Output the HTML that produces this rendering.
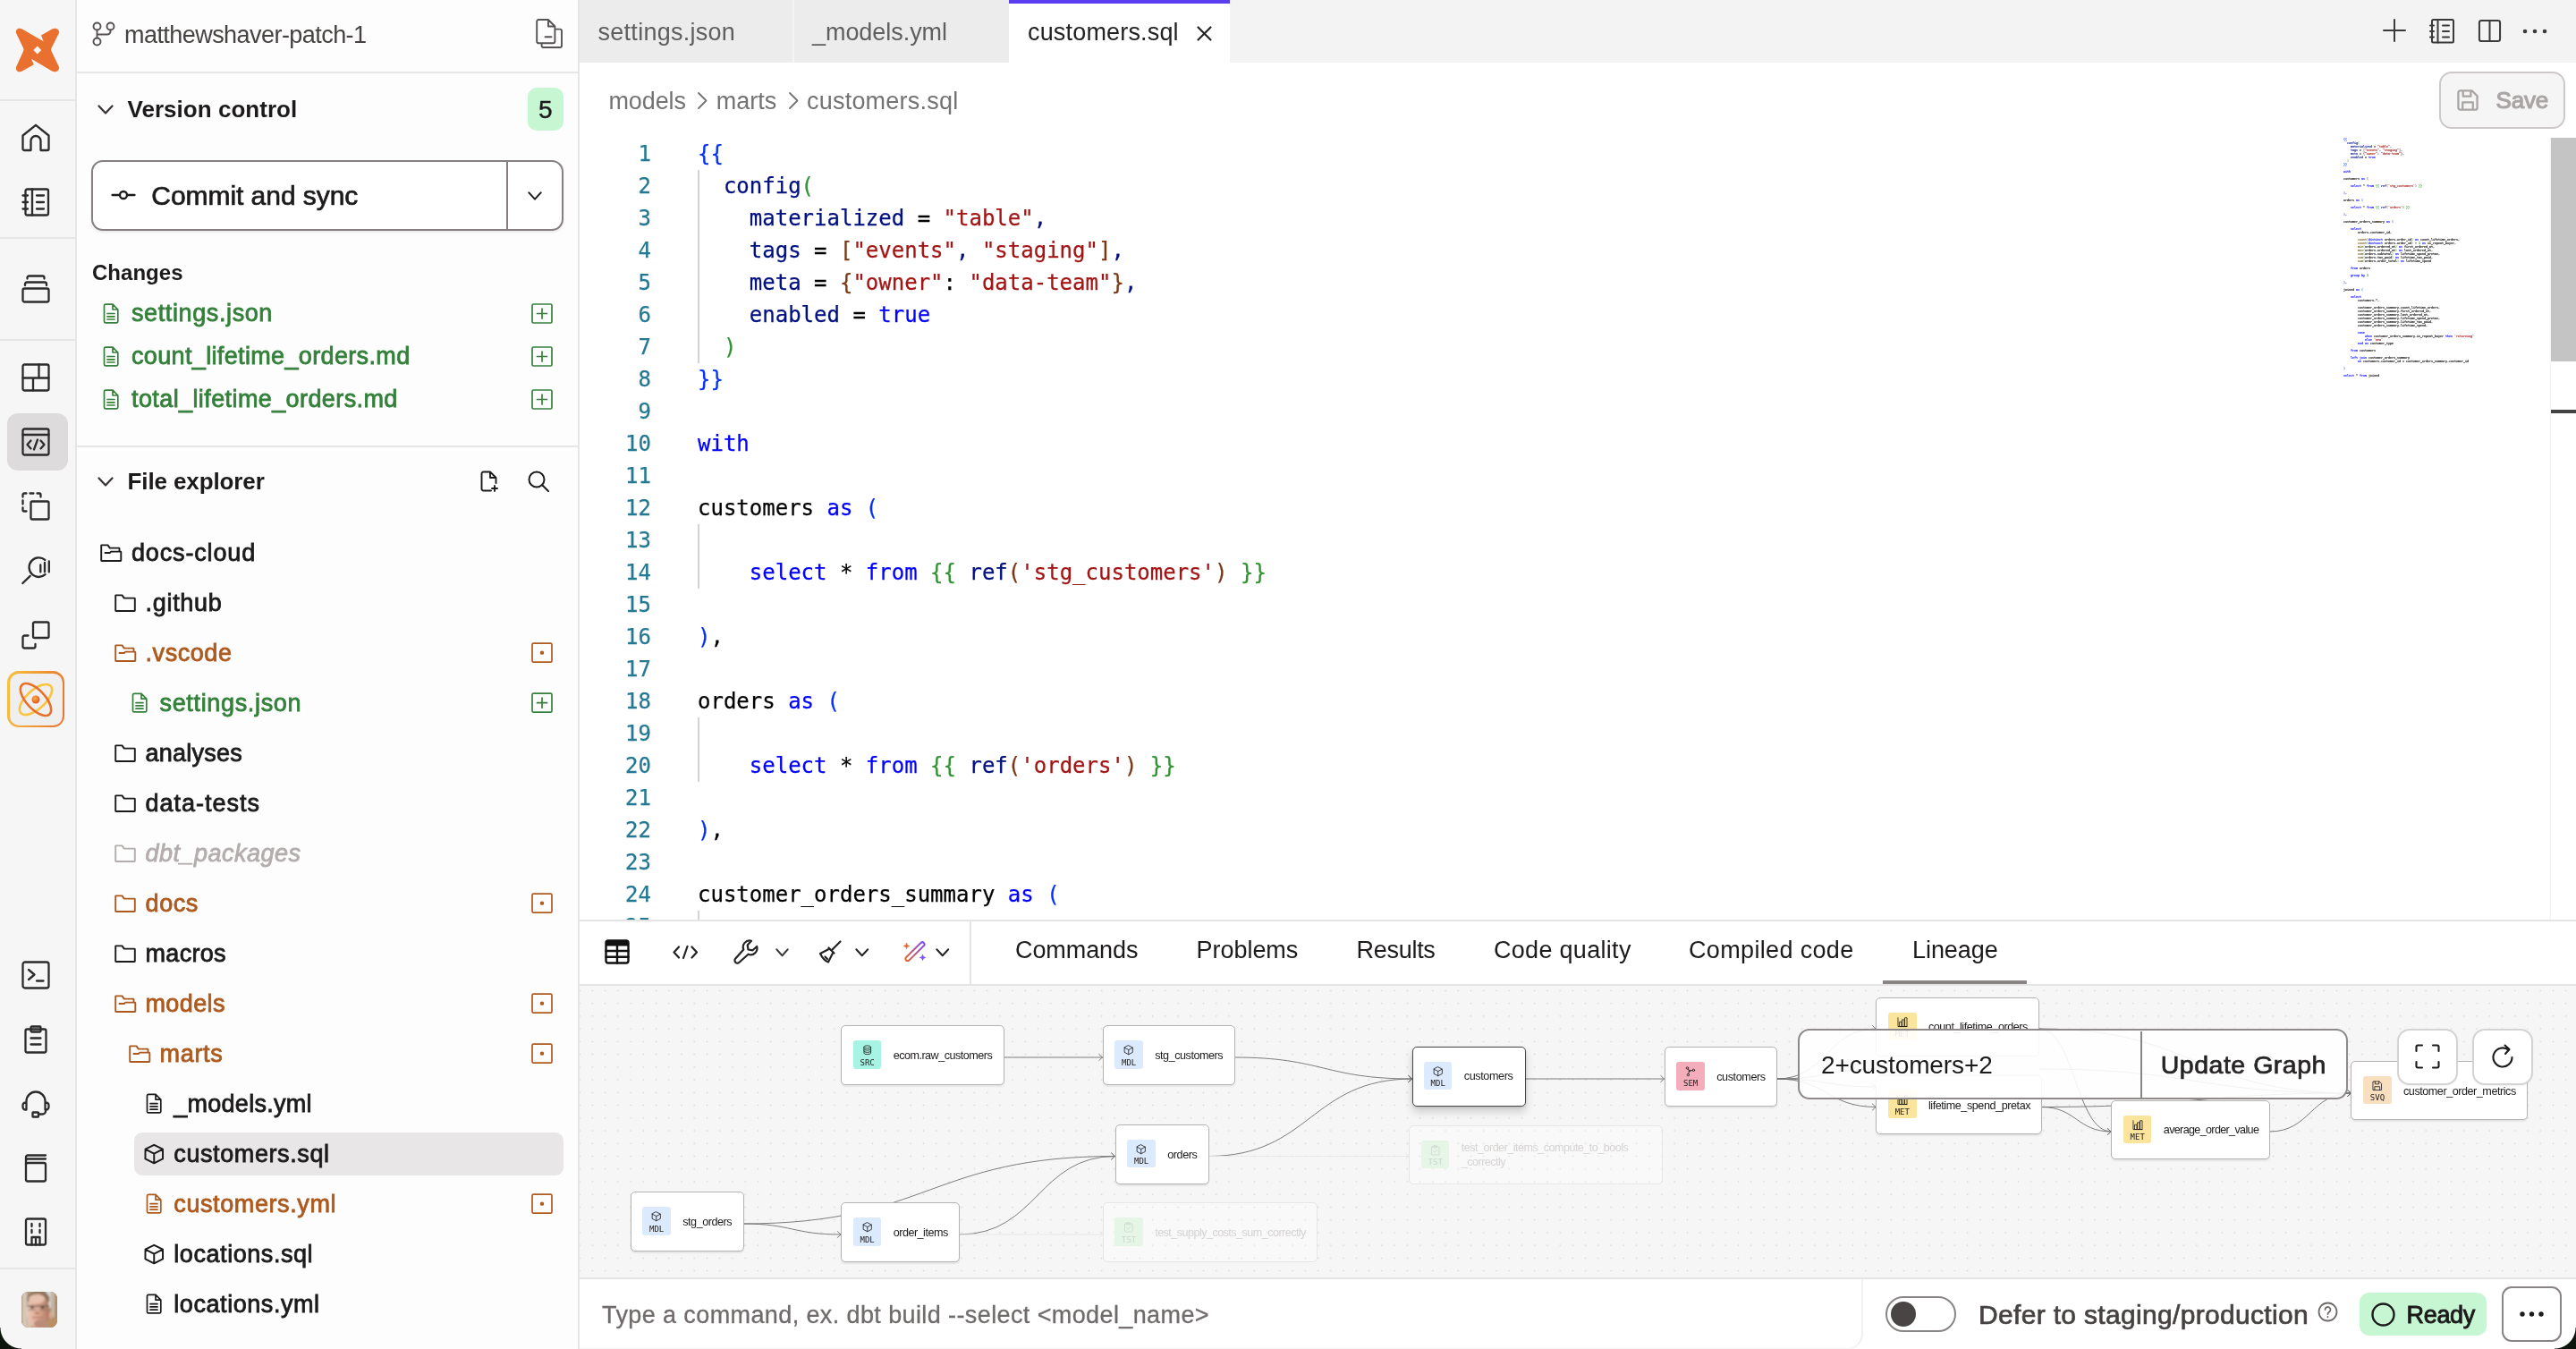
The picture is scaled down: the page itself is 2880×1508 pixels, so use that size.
<!DOCTYPE html>
<html lang="en"><head><meta charset="utf-8"><title>dbt Cloud IDE - customers.sql</title>
<style>
*{box-sizing:border-box;margin:0;padding:0}
html,body{width:2880px;height:1508px;overflow:hidden;background:#fff}
body{font-family:"Liberation Sans", sans-serif;position:relative;color:#1f1f1f}
.t{position:absolute;white-space:pre}
.b{position:absolute}
.b>svg{display:block;width:100%;height:100%;overflow:visible}
svg{fill:none;stroke:currentColor;stroke-linecap:round;stroke-linejoin:round}
.code{position:absolute;left:781px;top:0;font-family:"DejaVu Sans Mono","Liberation Mono",monospace;font-size:24px;white-space:pre;color:#000;letter-spacing:0;-webkit-text-stroke:0.25px}
.ln{position:absolute;font-family:"DejaVu Sans Mono","Liberation Mono",monospace;font-size:24px;color:#237893;text-align:right;width:80px;left:647px;white-space:pre;-webkit-text-stroke:0.25px}
.cl{position:absolute;left:0;height:36px;line-height:36px}
.k{color:#0000ff}.v{color:#001080}.s{color:#a31515}.b1{color:#0431fa}.b2{color:#319331}.b3{color:#7b3814}.n{color:#098658}.f{color:#795e26}
</style></head><body><div id="app" style="position:absolute;left:0;top:0;width:2880px;height:1508px;overflow:hidden;will-change:transform">

<div class="b" style="left:0px;top:0px;width:84px;height:1508px;background:#f7f6f6"></div>
<div class="b" style="left:84px;top:0px;width:2px;height:1508px;background:#e7e5e5"></div>
<div class="b" style="left:86px;top:0px;width:560px;height:1508px;background:#fdfdfd"></div>
<div class="b" style="left:646px;top:0px;width:2px;height:1508px;background:#e7e5e5"></div>
<div class="b" style="left:648px;top:0px;width:2232px;height:70px;background:#f3f3f3"></div>
<div class="b" style="left:648px;top:0px;width:480px;height:70px;background:#ececec"></div>
<div class="b" style="left:10px;top:22px;width:66px;height:66px;color:#2b2b2b;"><svg viewBox="0 0 66 66" style="stroke:none"><path fill="#e9702e" d="M8.300 15.500 C6.500 11 10.500 8.200 14.800 10.400 L38.600 24.200 L36 17.600 L48.200 10.400 C52.500 8.200 57.500 11 55.700 15.500 L47.400 32 Q46.800 33.500 47.400 35 L55.700 52.300 C57.500 56.800 52.500 59.800 48.200 57.600 L25 43.800 L27.800 50.200 L14.800 57.600 C10.500 59.800 6.500 56.800 8.300 52.300 L16.200 35 Q16.800 33.500 16.200 32Z"/><path fill="#f7f6f6" d="M31.800 29.600 L36.200 34 L31.800 38.400 L27.400 34Z"/></svg></div>
<div class="b" style="left:0px;top:111px;width:84px;height:2px;background:#e7e5e5"></div>
<div class="b" style="left:24px;top:138px;width:32px;height:32px;color:#2b2b2b;"><svg viewBox="0 0 32 32" stroke-width="2.3" ><path d="M1.500 13.500 L16 1.800 L30.500 13.500 V28.500 a1.500 1.500 0 0 1 -1.500 1.500 H21.500 V19.500 a5.500 5.500 0 0 0 -11 0 V30 H3 a1.500 1.500 0 0 1 -1.500 -1.500Z"/></svg></div>
<div class="b" style="left:24px;top:210px;width:32px;height:32px;color:#2b2b2b;"><svg viewBox="0 0 32 32" stroke-width="2.3" ><rect x="4.5" y="1.5" width="25.5" height="29" rx="2"/><path d="M12 1.5 V30.5 M1.5 8.5 H7 M1.5 16 H7 M1.5 23.5 H7 M17 8.500 H25 M17 16 H25 M17 23.500 H25"/></svg></div>
<div class="b" style="left:0px;top:265px;width:84px;height:2px;background:#e7e5e5"></div>
<div class="b" style="left:24px;top:307px;width:32px;height:32px;color:#2b2b2b;"><svg viewBox="0 0 32 32" stroke-width="2.3" ><rect x="1.5" y="15.5" width="29" height="15" rx="2"/><path d="M4 12 V10.500 a2 2 0 0 1 2 -2 H26 a2 2 0 0 1 2 2 V12 M6.500 4.500 V3.500 a2 2 0 0 1 2 -2 H23.500 a2 2 0 0 1 2 2 V4.500"/></svg></div>
<div class="b" style="left:0px;top:379px;width:84px;height:2px;background:#e7e5e5"></div>
<div class="b" style="left:24px;top:406px;width:32px;height:32px;color:#2b2b2b;"><svg viewBox="0 0 32 32" stroke-width="2.3" ><rect x="1.5" y="1.5" width="29" height="29" rx="2"/><path d="M1.5 16.500 H30.500 M19.500 1.500 V16.500 M13 16.500 V30.500"/></svg></div>
<div class="b" style="left:8px;top:462px;width:68px;height:64px;background:#dddbdb;border-radius:12px"></div>
<div class="b" style="left:24px;top:478px;width:32px;height:32px;color:#2b2b2b;"><svg viewBox="0 0 32 32" stroke-width="2.3" ><rect x="1.5" y="1.5" width="29" height="29" rx="2"/><path d="M1.5 8 H30.500 M10.500 14.500 L6.500 19 L10.500 23.500 M21.500 14.500 L25.500 19 L21.500 23.500 M18 13.500 L14 24.500"/></svg></div>
<div class="b" style="left:24px;top:550px;width:32px;height:32px;color:#2b2b2b;"><svg viewBox="0 0 32 32" stroke-width="2.3" ><rect x="10.5" y="10.5" width="20" height="20" rx="1.5"/><path d="M1.5 5.500 V3 a1.500 1.500 0 0 1 1.500 -1.500 H5.500 M9.500 1.500 H13.500 M17.500 1.500 H20 a1.500 1.500 0 0 1 1.500 1.500 V5.500 M1.500 9.500 V13.500 M1.500 17.500 V20 a1.500 1.500 0 0 0 1.500 1.500 H5.500"/></svg></div>
<div class="b" style="left:24px;top:621px;width:32px;height:32px;color:#2b2b2b;"><svg viewBox="0 0 32 32" stroke-width="2.3" ><path d="M26.300 4.900 A10.800 10.800 0 1 0 26.600 21.200 M9.700 22.900 L1.300 31 M21.300 10.500 V18.400 M26 7.900 V18.400 M30.800 6.500 V18.400"/></svg></div>
<div class="b" style="left:24px;top:694px;width:32px;height:32px;color:#2b2b2b;"><svg viewBox="0 0 32 32" stroke-width="2.3" ><rect x="13" y="1.500" width="17.500" height="17.500" rx="1.500"/><path d="M7.500 16.500 H3.500 a2 2 0 0 0 -2 2 V28.500 a2 2 0 0 0 2 2 H13.500 a2 2 0 0 0 2 -2 V26"/></svg></div>
<div class="b" style="left:8px;top:750px;width:64px;height:63px;border-radius:13px;background:linear-gradient(100deg,#f9c440,#e8702a)"></div>
<div class="b" style="left:10.5px;top:752.5px;width:59px;height:58px;background:#f0efef;border-radius:10.5px"></div>
<div class="b" style="left:16px;top:758px;width:48px;height:48px;color:#2b2b2b;"><svg viewBox="0 0 48 48" stroke-width="2.6"><defs><radialGradient id="ag" cx="40%" cy="35%"><stop offset="0" stop-color="#f9b23c"/><stop offset="1" stop-color="#e8672a"/></radialGradient></defs><ellipse cx="24" cy="24" rx="22.500" ry="10.500" transform="rotate(-42 24 24)" stroke="#f9c440"/><ellipse cx="24" cy="24" rx="22.500" ry="10.500" transform="rotate(47 24 24)" stroke="#e8702a"/><circle cx="24" cy="24" r="4.5" fill="url(#ag)" stroke="none"/></svg></div>
<div class="b" style="left:24px;top:1073.5px;width:32px;height:32px;color:#2b2b2b;"><svg viewBox="0 0 32 32" stroke-width="2.3" ><rect x="1.5" y="1.5" width="29" height="29" rx="2.5"/><path d="M8 10 L14.500 15.500 L8 21 M17 22.500 H24.500"/></svg></div>
<div class="b" style="left:24px;top:1146px;width:32px;height:32px;color:#2b2b2b;"><svg viewBox="0 0 32 32" stroke-width="2.3" ><rect x="4.5" y="4.500" width="23" height="26" rx="2"/><rect x="10.500" y="1.500" width="11" height="6" rx="1"/><path d="M10.500 14.500 H21.500 M10.500 21.500 H21.500"/></svg></div>
<div class="b" style="left:24px;top:1217.5px;width:32px;height:32px;color:#2b2b2b;"><svg viewBox="0 0 32 32" stroke-width="2.3" ><path d="M5.500 17 V13 a10.500 10.500 0 0 1 21 0 V17 M5.500 14.500 H4.500 a3 3 0 0 0 -3 3 V19.500 a3 3 0 0 0 3 3 H5.500Z M26.500 14.500 H27.500 a3 3 0 0 1 3 3 V19.500 a3 3 0 0 1 -3 3 H26.500Z M27 22.500 V24 a3.500 3.500 0 0 1 -3.500 3.500 H19"/><rect x="12.500" y="25.500" width="6.500" height="5" rx=".5"/></svg></div>
<div class="b" style="left:24px;top:1289.5px;width:32px;height:32px;color:#2b2b2b;"><svg viewBox="0 0 32 32" stroke-width="2.3" ><rect x="5" y="10" width="22" height="20.500" rx="2"/><path d="M5 12 V3.500 a2 2 0 0 1 2 -2 H27 M5 7.500 a2 2 0 0 1 2 -2 H27"/></svg></div>
<div class="b" style="left:24px;top:1361px;width:32px;height:32px;color:#2b2b2b;"><svg viewBox="0 0 32 32" stroke-width="2.3" ><rect x="5" y="1.500" width="22" height="29" rx="2"/><path d="M11.500 7 V10 M20.500 7 V10 M11.500 14 V17 M20.500 14 V17 M11.500 30.500 V22 H20.500 V30.500 M16 22 V30.500"/></svg></div>
<div class="b" style="left:0px;top:1417px;width:84px;height:2px;background:#e7e5e5"></div>
<div class="b" style="left:24px;top:1444px;width:40px;height:40px;border-radius:8px;overflow:hidden;background:#a58a72"><svg viewBox="0 0 40 40" style="stroke:none"><defs><filter id="avb" x="-10%" y="-10%" width="120%" height="120%"><feGaussianBlur stdDeviation="0.9"/></filter><linearGradient id="avf" x1="0" y1="0" x2="1" y2="0"><stop offset="0" stop-color="#ecc9b8"/><stop offset=".55" stop-color="#d9a68f"/><stop offset="1" stop-color="#a8745e"/></linearGradient></defs><rect width="40" height="40" fill="#b79c80"/><g filter="url(#avb)"><rect x="-2" y="-2" width="44" height="44" fill="#b39a7f"/><rect x="1" y="-2" width="5" height="44" fill="#d2c8ba"/><rect x="6.500" y="22" width="4" height="20" fill="#d6c7b0"/><rect x="28" y="-2" width="5" height="20" fill="#d9dadd"/><rect x="34" y="-2" width="3" height="30" fill="#cbb9a2"/><rect x="37" y="4" width="4" height="36" fill="#a98b6c"/><rect x="30" y="30" width="11" height="11" fill="#b98f63"/><ellipse cx="19" cy="8" rx="12.500" ry="9" fill="#8b6f58"/><ellipse cx="18.500" cy="22" rx="13" ry="19.500" fill="url(#avf)"/><ellipse cx="17" cy="8" rx="9" ry="5" fill="#e8c2ae"/><ellipse cx="32.500" cy="26" rx="1.800" ry="4" fill="#d9a48f"/><rect x="6" y="15.300" width="25" height="1.300" fill="#6b5a50"/><rect x="7.500" y="19.800" width="9" height="1" fill="#8a7468"/><rect x="20" y="19.800" width="9" height="1" fill="#8a7468"/><ellipse cx="12" cy="17.600" rx="2" ry="1.200" fill="#3d3029"/><ellipse cx="23.500" cy="17.600" rx="2" ry="1.200" fill="#3d3029"/><ellipse cx="17.500" cy="24" rx="2.500" ry="1.200" fill="#b5705c"/><rect x="12" y="28.200" width="12" height="1.100" fill="#a86a5c"/><ellipse cx="22" cy="36" rx="8" ry="5" fill="#b98c7a"/></g></svg></div>
<div class="b" style="left:103px;top:24px;width:26px;height:28px;color:#575252;"><svg viewBox="0 0 26 28" stroke-width="1.9" ><circle cx="5.5" cy="5.500" r="4"/><circle cx="20.500" cy="5.500" r="4"/><circle cx="5.500" cy="22.500" r="4"/><path d="M5.500 9.500 V18.500 M20.500 9.500 V11 a3.500 3.500 0 0 1 -3.500 3.500 H5.500"/></svg></div>
<div class="t" style="left:139px;top:20.80px;font-size:27.0px;line-height:36px;color:#474242;font-weight:400;font-style:normal;letter-spacing:-0.554px;">matthewshaver-patch-1</div>
<div class="b" style="left:599px;top:21px;width:30px;height:33px;color:#575252;"><svg viewBox="0 0 30 33" stroke-width="1.9" ><path d="M3.200 1 H14 L21.400 8.500 V25.300 a2 2 0 0 1 -2 2 H3.200 a2 2 0 0 1 -2 -2 V3 a2 2 0 0 1 2 -2Z M14 1 V8.500 H21.400 M10.500 20.300 H17.500 M6.600 28.500 V30 a2 2 0 0 0 2 2 H27 a2 2 0 0 0 2 -2 V13.600 a2 2 0 0 0 -2 -2 H23"/></svg></div>
<div class="b" style="left:86px;top:80px;width:560px;height:2px;background:#e7e5e5"></div>
<div class="b" style="left:109px;top:117px;width:18px;height:11px;color:#3b3737;"><svg viewBox="0 0 18 11" stroke-width="2.3" preserveAspectRatio="none"><path d="M1.500 1.500 L9 9.500 L16.500 1.500"/></svg></div>
<div class="t" style="left:142.5px;top:103.86px;font-size:26px;line-height:36px;color:#1c1a1a;font-weight:700;font-style:normal;letter-spacing:0.036px;">Version control</div>
<div class="b" style="left:590px;top:98px;width:40px;height:48px;background:#c6f7d2;border-radius:10px"></div>
<div class="t" style="left:602px;top:104.08px;font-size:28px;line-height:37px;color:#1c1a1a;font-weight:400;font-style:normal;-webkit-text-stroke:0.4px #1c1a1a;">5</div>
<div class="b" style="left:102px;top:178.5px;width:528px;height:79px;border:2px solid #857f7f;border-radius:13px;background:#fff;box-shadow:0 2px 3px rgba(0,0,0,.08)"></div>
<div class="b" style="left:566px;top:180px;width:2px;height:76px;background:#857f7f"></div>
<div class="b" style="left:124px;top:207px;width:28px;height:22px;color:#1c1a1a;"><svg viewBox="0 0 28 22" stroke-width="2.3" ><circle cx="14" cy="11" r="4"/><path d="M1.500 11 H10 M18 11 H26.500"/></svg></div>
<div class="t" style="left:169.3px;top:198.50px;font-size:30px;line-height:39px;color:#1c1a1a;font-weight:400;font-style:normal;letter-spacing:-0.05px;-webkit-text-stroke:0.7px #1c1a1a;">Commit and sync</div>
<div class="b" style="left:590px;top:214px;width:16px;height:10px;color:#1c1a1a;"><svg viewBox="0 0 18 11" stroke-width="2.3" preserveAspectRatio="none"><path d="M1.500 1.500 L9 9.500 L16.500 1.500"/></svg></div>
<div class="t" style="left:103px;top:288.14px;font-size:24px;line-height:33px;color:#1c1a1a;font-weight:700;font-style:normal;letter-spacing:0.02px;">Changes</div>
<div class="b" style="left:115px;top:338.5px;width:18px;height:23px;color:#34803b;"><svg viewBox="0 0 18 23" stroke-width="1.7" ><path d="M3 1.200 H11 L16.800 7 V20.300 a1.500 1.500 0 0 1 -1.500 1.500 H3 a1.500 1.500 0 0 1 -1.500 -1.500 V2.700 a1.500 1.500 0 0 1 1.500 -1.500Z M11 1.200 V7 H16.800 M5 11.500 H13 M5 14.800 H13 M5 18 H13"/></svg></div>
<div class="t" style="left:147px;top:331.50px;font-size:27.0px;line-height:36px;color:#34803b;font-weight:400;font-style:normal;letter-spacing:0.608px;-webkit-text-stroke:0.8px #34803b;">settings.json</div>
<div class="b" style="left:594px;top:338.5px;width:24px;height:23px;color:#34803b;"><svg viewBox="0 0 24 23" stroke-width="1.7" ><rect x="1" y="1" width="22" height="21" rx="1.500"/><path d="M6.500 11.500 H17.500 M12 6 V17"/></svg></div>
<div class="b" style="left:115px;top:386.5px;width:18px;height:23px;color:#34803b;"><svg viewBox="0 0 18 23" stroke-width="1.7" ><path d="M3 1.200 H11 L16.800 7 V20.300 a1.500 1.500 0 0 1 -1.500 1.500 H3 a1.500 1.500 0 0 1 -1.500 -1.500 V2.700 a1.500 1.500 0 0 1 1.500 -1.500Z M11 1.200 V7 H16.800 M5 11.500 H13 M5 14.800 H13 M5 18 H13"/></svg></div>
<div class="t" style="left:147px;top:379.50px;font-size:27.0px;line-height:36px;color:#34803b;font-weight:400;font-style:normal;letter-spacing:0.348px;-webkit-text-stroke:0.8px #34803b;">count_lifetime_orders.md</div>
<div class="b" style="left:594px;top:386.5px;width:24px;height:23px;color:#34803b;"><svg viewBox="0 0 24 23" stroke-width="1.7" ><rect x="1" y="1" width="22" height="21" rx="1.500"/><path d="M6.500 11.500 H17.500 M12 6 V17"/></svg></div>
<div class="b" style="left:115px;top:434.5px;width:18px;height:23px;color:#34803b;"><svg viewBox="0 0 18 23" stroke-width="1.7" ><path d="M3 1.200 H11 L16.800 7 V20.300 a1.500 1.500 0 0 1 -1.500 1.500 H3 a1.500 1.500 0 0 1 -1.500 -1.500 V2.700 a1.500 1.500 0 0 1 1.500 -1.500Z M11 1.200 V7 H16.800 M5 11.500 H13 M5 14.800 H13 M5 18 H13"/></svg></div>
<div class="t" style="left:147px;top:427.50px;font-size:27.0px;line-height:36px;color:#34803b;font-weight:400;font-style:normal;letter-spacing:0.402px;-webkit-text-stroke:0.8px #34803b;">total_lifetime_orders.md</div>
<div class="b" style="left:594px;top:434.5px;width:24px;height:23px;color:#34803b;"><svg viewBox="0 0 24 23" stroke-width="1.7" ><rect x="1" y="1" width="22" height="21" rx="1.500"/><path d="M6.500 11.500 H17.500 M12 6 V17"/></svg></div>
<div class="b" style="left:86px;top:498px;width:560px;height:2px;background:#e7e5e5"></div>
<div class="b" style="left:109px;top:533px;width:18px;height:11px;color:#3b3737;"><svg viewBox="0 0 18 11" stroke-width="2.3" preserveAspectRatio="none"><path d="M1.500 1.500 L9 9.500 L16.500 1.500"/></svg></div>
<div class="t" style="left:142.5px;top:519.86px;font-size:26px;line-height:36px;color:#1c1a1a;font-weight:700;font-style:normal;letter-spacing:-0.11px;">File explorer</div>
<div class="b" style="left:537px;top:526px;width:21px;height:24px;color:#1c1a1a;"><svg viewBox="0 0 21 24" stroke-width="1.9" ><path d="M12 22.500 H3.500 a2 2 0 0 1 -2 -2 V3.500 a2 2 0 0 1 2 -2 H11 L17.500 8 V14 M11 1.500 V8 H17.500 M16 17 V23 M13 20 H19"/></svg></div>
<div class="b" style="left:590px;top:526px;width:24px;height:24px;color:#1c1a1a;"><svg viewBox="0 0 24 24" stroke-width="2" ><circle cx="10" cy="10" r="8.500"/><path d="M16.500 16.500 L23 23"/></svg></div>
<div class="b" style="left:111.5px;top:607.7px;width:24.5px;height:20.3px;color:#1c1a1a;"><svg viewBox="0 0 24.5 20" stroke-width="1.9" ><path d="M1.200 1.700 a.5 .5 0 0 1 .5 -.5 H8.500 L10.800 4.500 H21 a.5 .5 0 0 1 .5 .5 V8 M5.500 9.800 H11 L12.200 8.500 H22.800 a.5 .5 0 0 1 .5 .5 V18.300 a.5 .5 0 0 1 -.5 .5 H1.700 a.5 .5 0 0 1 -.5 -.5 V1.700"/></svg></div>
<div class="t" style="left:147px;top:599.80px;font-size:27.0px;line-height:36px;color:#1c1a1a;font-weight:400;font-style:normal;letter-spacing:0.842px;-webkit-text-stroke:0.8px #1c1a1a;">docs-cloud</div>
<div class="b" style="left:128px;top:663.6px;width:24px;height:20.3px;color:#1c1a1a;"><svg viewBox="0 0 24 20" stroke-width="1.9" ><path d="M1.200 1.700 a.5 .5 0 0 1 .5 -.5 H8.500 L10.800 4.500 H22.300 a.5 .5 0 0 1 .5 .5 V18.300 a.5 .5 0 0 1 -.5 .5 H1.700 a.5 .5 0 0 1 -.5 -.5Z"/></svg></div>
<div class="t" style="left:162.5px;top:655.80px;font-size:27.0px;line-height:36px;color:#1c1a1a;font-weight:400;font-style:normal;letter-spacing:0.703px;-webkit-text-stroke:0.8px #1c1a1a;">.github</div>
<div class="b" style="left:128px;top:719.7px;width:24.5px;height:20.3px;color:#ad5a1e;"><svg viewBox="0 0 24.5 20" stroke-width="1.9" ><path d="M1.200 1.700 a.5 .5 0 0 1 .5 -.5 H8.500 L10.800 4.500 H21 a.5 .5 0 0 1 .5 .5 V8 M5.500 9.800 H11 L12.200 8.500 H22.800 a.5 .5 0 0 1 .5 .5 V18.300 a.5 .5 0 0 1 -.5 .5 H1.700 a.5 .5 0 0 1 -.5 -.5 V1.700"/></svg></div>
<div class="t" style="left:162.5px;top:711.80px;font-size:27.0px;line-height:36px;color:#ad5a1e;font-weight:400;font-style:normal;letter-spacing:0.562px;-webkit-text-stroke:0.8px #ad5a1e;">.vscode</div>
<div class="b" style="left:594px;top:718px;width:24px;height:23.3px;color:#ad5a1e;"><svg viewBox="0 0 24 23" stroke-width="1.7" ><rect x="1" y="1" width="22" height="21" rx="1.500"/><circle cx="12" cy="11.500" r="2.2" fill="currentColor" stroke="none"/></svg></div>
<div class="b" style="left:146.7px;top:774.2px;width:18px;height:23.3px;color:#34803b;"><svg viewBox="0 0 18 23" stroke-width="1.7" ><path d="M3 1.200 H11 L16.800 7 V20.300 a1.500 1.500 0 0 1 -1.500 1.500 H3 a1.500 1.500 0 0 1 -1.500 -1.500 V2.700 a1.500 1.500 0 0 1 1.500 -1.500Z M11 1.200 V7 H16.800 M5 11.500 H13 M5 14.800 H13 M5 18 H13"/></svg></div>
<div class="t" style="left:178.5px;top:767.80px;font-size:27.0px;line-height:36px;color:#34803b;font-weight:400;font-style:normal;letter-spacing:0.662px;-webkit-text-stroke:0.8px #34803b;">settings.json</div>
<div class="b" style="left:594px;top:774px;width:24px;height:23.3px;color:#34803b;"><svg viewBox="0 0 24 23" stroke-width="1.7" ><rect x="1" y="1" width="22" height="21" rx="1.500"/><path d="M6.500 11.500 H17.500 M12 6 V17"/></svg></div>
<div class="b" style="left:128px;top:831.6px;width:24px;height:20.3px;color:#1c1a1a;"><svg viewBox="0 0 24 20" stroke-width="1.9" ><path d="M1.200 1.700 a.5 .5 0 0 1 .5 -.5 H8.500 L10.800 4.500 H22.300 a.5 .5 0 0 1 .5 .5 V18.300 a.5 .5 0 0 1 -.5 .5 H1.700 a.5 .5 0 0 1 -.5 -.5Z"/></svg></div>
<div class="t" style="left:162.5px;top:823.80px;font-size:27.0px;line-height:36px;color:#1c1a1a;font-weight:400;font-style:normal;letter-spacing:0.24px;-webkit-text-stroke:0.8px #1c1a1a;">analyses</div>
<div class="b" style="left:128px;top:887.6px;width:24px;height:20.3px;color:#1c1a1a;"><svg viewBox="0 0 24 20" stroke-width="1.9" ><path d="M1.200 1.700 a.5 .5 0 0 1 .5 -.5 H8.500 L10.800 4.500 H22.300 a.5 .5 0 0 1 .5 .5 V18.300 a.5 .5 0 0 1 -.5 .5 H1.700 a.5 .5 0 0 1 -.5 -.5Z"/></svg></div>
<div class="t" style="left:162.5px;top:879.80px;font-size:27.0px;line-height:36px;color:#1c1a1a;font-weight:400;font-style:normal;letter-spacing:0.994px;-webkit-text-stroke:0.8px #1c1a1a;">data-tests</div>
<div class="b" style="left:128px;top:943.6px;width:24px;height:20.3px;color:#b3adad;"><svg viewBox="0 0 24 20" stroke-width="1.9" ><path d="M1.200 1.700 a.5 .5 0 0 1 .5 -.5 H8.500 L10.800 4.500 H22.300 a.5 .5 0 0 1 .5 .5 V18.300 a.5 .5 0 0 1 -.5 .5 H1.700 a.5 .5 0 0 1 -.5 -.5Z"/></svg></div>
<div class="t" style="left:162.5px;top:935.80px;font-size:27.0px;line-height:36px;color:#b3adad;font-weight:400;font-style:italic;letter-spacing:0.488px;-webkit-text-stroke:0.8px #b3adad;">dbt_packages</div>
<div class="b" style="left:128px;top:999.6px;width:24px;height:20.3px;color:#ad5a1e;"><svg viewBox="0 0 24 20" stroke-width="1.9" ><path d="M1.200 1.700 a.5 .5 0 0 1 .5 -.5 H8.500 L10.800 4.500 H22.300 a.5 .5 0 0 1 .5 .5 V18.300 a.5 .5 0 0 1 -.5 .5 H1.700 a.5 .5 0 0 1 -.5 -.5Z"/></svg></div>
<div class="t" style="left:162.5px;top:991.80px;font-size:27.0px;line-height:36px;color:#ad5a1e;font-weight:400;font-style:normal;letter-spacing:0.613px;-webkit-text-stroke:0.8px #ad5a1e;">docs</div>
<div class="b" style="left:594px;top:998px;width:24px;height:23.3px;color:#ad5a1e;"><svg viewBox="0 0 24 23" stroke-width="1.7" ><rect x="1" y="1" width="22" height="21" rx="1.500"/><circle cx="12" cy="11.500" r="2.2" fill="currentColor" stroke="none"/></svg></div>
<div class="b" style="left:128px;top:1055.6px;width:24px;height:20.3px;color:#1c1a1a;"><svg viewBox="0 0 24 20" stroke-width="1.9" ><path d="M1.200 1.700 a.5 .5 0 0 1 .5 -.5 H8.500 L10.800 4.500 H22.300 a.5 .5 0 0 1 .5 .5 V18.300 a.5 .5 0 0 1 -.5 .5 H1.700 a.5 .5 0 0 1 -.5 -.5Z"/></svg></div>
<div class="t" style="left:162.5px;top:1047.80px;font-size:27.0px;line-height:36px;color:#1c1a1a;font-weight:400;font-style:normal;letter-spacing:0.314px;-webkit-text-stroke:0.8px #1c1a1a;">macros</div>
<div class="b" style="left:128px;top:1111.7px;width:24.5px;height:20.3px;color:#ad5a1e;"><svg viewBox="0 0 24.5 20" stroke-width="1.9" ><path d="M1.200 1.700 a.5 .5 0 0 1 .5 -.5 H8.500 L10.800 4.500 H21 a.5 .5 0 0 1 .5 .5 V8 M5.500 9.800 H11 L12.200 8.500 H22.800 a.5 .5 0 0 1 .5 .5 V18.300 a.5 .5 0 0 1 -.5 .5 H1.700 a.5 .5 0 0 1 -.5 -.5 V1.700"/></svg></div>
<div class="t" style="left:162.5px;top:1103.80px;font-size:27.0px;line-height:36px;color:#ad5a1e;font-weight:400;font-style:normal;letter-spacing:0.376px;-webkit-text-stroke:0.8px #ad5a1e;">models</div>
<div class="b" style="left:594px;top:1110px;width:24px;height:23.3px;color:#ad5a1e;"><svg viewBox="0 0 24 23" stroke-width="1.7" ><rect x="1" y="1" width="22" height="21" rx="1.500"/><circle cx="12" cy="11.500" r="2.2" fill="currentColor" stroke="none"/></svg></div>
<div class="b" style="left:144px;top:1167.7px;width:24.5px;height:20.3px;color:#ad5a1e;"><svg viewBox="0 0 24.5 20" stroke-width="1.9" ><path d="M1.200 1.700 a.5 .5 0 0 1 .5 -.5 H8.500 L10.800 4.500 H21 a.5 .5 0 0 1 .5 .5 V8 M5.500 9.800 H11 L12.200 8.500 H22.800 a.5 .5 0 0 1 .5 .5 V18.300 a.5 .5 0 0 1 -.5 .5 H1.700 a.5 .5 0 0 1 -.5 -.5 V1.700"/></svg></div>
<div class="t" style="left:178.5px;top:1159.80px;font-size:27.0px;line-height:36px;color:#ad5a1e;font-weight:400;font-style:normal;letter-spacing:0.7px;-webkit-text-stroke:0.8px #ad5a1e;">marts</div>
<div class="b" style="left:594px;top:1166px;width:24px;height:23.3px;color:#ad5a1e;"><svg viewBox="0 0 24 23" stroke-width="1.7" ><rect x="1" y="1" width="22" height="21" rx="1.500"/><circle cx="12" cy="11.500" r="2.2" fill="currentColor" stroke="none"/></svg></div>
<div class="b" style="left:162.7px;top:1222.2px;width:18px;height:23.3px;color:#1c1a1a;"><svg viewBox="0 0 18 23" stroke-width="1.7" ><path d="M3 1.200 H11 L16.800 7 V20.300 a1.500 1.500 0 0 1 -1.500 1.500 H3 a1.500 1.500 0 0 1 -1.500 -1.500 V2.700 a1.500 1.500 0 0 1 1.500 -1.500Z M11 1.200 V7 H16.800 M5 11.500 H13 M5 14.800 H13 M5 18 H13"/></svg></div>
<div class="t" style="left:194.3px;top:1215.80px;font-size:27.0px;line-height:36px;color:#1c1a1a;font-weight:400;font-style:normal;letter-spacing:0.259px;-webkit-text-stroke:0.8px #1c1a1a;">_models.yml</div>
<div class="b" style="left:150px;top:1266px;width:480px;height:48px;background:#e8e6e6;border-radius:9px"></div>
<div class="b" style="left:160.5px;top:1277.8px;width:22.5px;height:24.2px;color:#1c1a1a;"><svg viewBox="0 0 23 24" stroke-width="2" ><path d="M11.500 1.500 L21.500 6.500 V17.500 L11.500 22.500 L1.500 17.500 V6.500Z M1.500 6.500 L11.500 11.500 L21.500 6.500 M11.500 11.500 V22.500"/></svg></div>
<div class="t" style="left:194.3px;top:1271.80px;font-size:27.0px;line-height:36px;color:#1c1a1a;font-weight:400;font-style:normal;letter-spacing:0.595px;-webkit-text-stroke:0.8px #1c1a1a;">customers.sql</div>
<div class="b" style="left:162.7px;top:1334.2px;width:18px;height:23.3px;color:#ad5a1e;"><svg viewBox="0 0 18 23" stroke-width="1.7" ><path d="M3 1.200 H11 L16.800 7 V20.300 a1.500 1.500 0 0 1 -1.500 1.500 H3 a1.500 1.500 0 0 1 -1.500 -1.500 V2.700 a1.500 1.500 0 0 1 1.500 -1.500Z M11 1.200 V7 H16.800 M5 11.500 H13 M5 14.800 H13 M5 18 H13"/></svg></div>
<div class="t" style="left:194.3px;top:1327.80px;font-size:27.0px;line-height:36px;color:#ad5a1e;font-weight:400;font-style:normal;letter-spacing:0.598px;-webkit-text-stroke:0.8px #ad5a1e;">customers.yml</div>
<div class="b" style="left:594px;top:1334px;width:24px;height:23.3px;color:#ad5a1e;"><svg viewBox="0 0 24 23" stroke-width="1.7" ><rect x="1" y="1" width="22" height="21" rx="1.500"/><circle cx="12" cy="11.500" r="2.2" fill="currentColor" stroke="none"/></svg></div>
<div class="b" style="left:160.5px;top:1389.8px;width:22.5px;height:24.2px;color:#1c1a1a;"><svg viewBox="0 0 23 24" stroke-width="2" ><path d="M11.500 1.500 L21.500 6.500 V17.500 L11.500 22.500 L1.500 17.500 V6.500Z M1.500 6.500 L11.500 11.500 L21.500 6.500 M11.500 11.500 V22.500"/></svg></div>
<div class="t" style="left:194.3px;top:1383.80px;font-size:27.0px;line-height:36px;color:#1c1a1a;font-weight:400;font-style:normal;letter-spacing:0.562px;-webkit-text-stroke:0.8px #1c1a1a;">locations.sql</div>
<div class="b" style="left:162.7px;top:1446.2px;width:18px;height:23.3px;color:#1c1a1a;"><svg viewBox="0 0 18 23" stroke-width="1.7" ><path d="M3 1.200 H11 L16.800 7 V20.300 a1.500 1.500 0 0 1 -1.500 1.500 H3 a1.500 1.500 0 0 1 -1.500 -1.500 V2.700 a1.500 1.500 0 0 1 1.500 -1.500Z M11 1.200 V7 H16.800 M5 11.500 H13 M5 14.800 H13 M5 18 H13"/></svg></div>
<div class="t" style="left:194.3px;top:1439.80px;font-size:27.0px;line-height:36px;color:#1c1a1a;font-weight:400;font-style:normal;letter-spacing:0.564px;-webkit-text-stroke:0.8px #1c1a1a;">locations.yml</div>
<div class="b" style="left:886px;top:0px;width:2px;height:70px;background:#f4f4f4"></div>
<div class="b" style="left:1128px;top:0px;width:246.5px;height:70px;background:#fff"></div>
<div class="b" style="left:1128px;top:0px;width:246.5px;height:4px;background:#5a3ef0"></div>
<div class="t" style="left:668.6px;top:18.00px;font-size:27.0px;line-height:36px;color:#5f5f5f;font-weight:400;font-style:normal;letter-spacing:0.254px;">settings.json</div>
<div class="t" style="left:908px;top:18.00px;font-size:27.0px;line-height:36px;color:#5f5f5f;font-weight:400;font-style:normal;letter-spacing:-0.05px;">_models.yml</div>
<div class="t" style="left:1149px;top:18.00px;font-size:27.0px;line-height:36px;color:#232323;font-weight:400;font-style:normal;letter-spacing:0.172px;">customers.sql</div>
<div class="b" style="left:1338px;top:29px;width:17px;height:17px;color:#232323;"><svg viewBox="0 0 17 17" stroke-width="2.2" ><path d="M1.500 1.500 L15.500 15.500 M15.500 1.500 L1.500 15.500"/></svg></div>
<div class="b" style="left:2664px;top:21px;width:26px;height:26px;color:#3a3a3a;"><svg viewBox="0 0 26 26" stroke-width="2" ><path d="M13 1 V25 M1 13 H25"/></svg></div>
<div class="b" style="left:2716px;top:21px;width:28px;height:27.5px;color:#3a3a3a;"><svg viewBox="0 0 28 27.5" stroke-width="2" ><rect x="3" y="1" width="24" height="25.500" rx="1.500"/><path d="M9.500 1 V26.500 M1 7.500 H5 M1 14 H5 M1 20.500 H5 M15 7.500 H22 M15 14 H22 M15 20.500 H22"/></svg></div>
<div class="b" style="left:2769.5px;top:20.5px;width:27px;height:27px;color:#3a3a3a;"><svg viewBox="0 0 28 28" stroke-width="2.1" ><rect x="2" y="2" width="24" height="24" rx="2.500"/><path d="M14 2 V26"/></svg></div>
<div class="b" style="left:2820px;top:32px;width:28px;height:6px;color:#3a3a3a;"><svg viewBox="0 0 28 6" style="stroke:none"><circle cx="3" cy="3" r="2.300" fill="currentColor"/><circle cx="14" cy="3" r="2.300" fill="currentColor"/><circle cx="25" cy="3" r="2.300" fill="currentColor"/></svg></div>
<div class="t" style="left:680.4px;top:95.00px;font-size:27.0px;line-height:36px;color:#737373;font-weight:400;font-style:normal;letter-spacing:-0.091px;">models</div>
<div class="b" style="left:779.5px;top:102.5px;width:10.5px;height:19px;color:#737373;"><svg viewBox="0 0 10.5 19" stroke-width="1.8" ><path d="M1 1 L9.500 9.500 L1 18"/></svg></div>
<div class="t" style="left:800.8px;top:95.00px;font-size:27.0px;line-height:36px;color:#737373;font-weight:400;font-style:normal;letter-spacing:-0.04px;">marts</div>
<div class="b" style="left:881.5px;top:102.5px;width:10.5px;height:19px;color:#737373;"><svg viewBox="0 0 10.5 19" stroke-width="1.8" ><path d="M1 1 L9.500 9.500 L1 18"/></svg></div>
<div class="t" style="left:902px;top:95.00px;font-size:27.0px;line-height:36px;color:#737373;font-weight:400;font-style:normal;letter-spacing:0.218px;">customers.sql</div>
<div class="b" style="left:2727px;top:80.3px;width:141px;height:63.5px;border:2.5px solid #cdc9c9;border-radius:14px;background:#f6f5f5"></div>
<div class="b" style="left:2747px;top:100px;width:24px;height:24px;color:#aaa5a5;"><svg viewBox="0 0 25 25" stroke-width="2.4" ><path d="M3.500 1.500 H17.500 L23.500 7.500 V21.500 a2 2 0 0 1 -2 2 H3.500 a2 2 0 0 1 -2 -2 V3.500 a2 2 0 0 1 2 -2Z M7 1.500 V8 H16 V1.500 M6.500 23.500 V15 H18.500 V23.500"/></svg></div>
<div class="t" style="left:2790.6px;top:93.66px;font-size:26px;line-height:36px;color:#aaa5a5;font-weight:400;font-style:normal;letter-spacing:-0.216px;-webkit-text-stroke:1.1px #aaa5a5;">Save</div>
<div class="b" style="left:648px;top:150px;width:2204px;height:878px;overflow:hidden">
<div class="code" style="left:132px;top:4px">
<div class="cl" style="top:0px"><span class="b1">{{</span></div>
<div class="cl" style="top:36px">  <span class="v">config</span><span class="b2">(</span></div>
<div class="cl" style="top:72px">    <span class="v">materialized</span> = <span class="s">"table"</span><span class="v">,</span></div>
<div class="cl" style="top:108px">    <span class="v">tags</span> = <span class="b3">[</span><span class="s">"events"</span><span class="v">,</span> <span class="s">"staging"</span><span class="b3">]</span><span class="v">,</span></div>
<div class="cl" style="top:144px">    <span class="v">meta</span> = <span class="b3">{</span><span class="s">"owner"</span>: <span class="s">"data-team"</span><span class="b3">}</span><span class="v">,</span></div>
<div class="cl" style="top:180px">    <span class="v">enabled</span> = <span class="k">true</span></div>
<div class="cl" style="top:216px">  <span class="b2">)</span></div>
<div class="cl" style="top:252px"><span class="b1">}}</span></div>
<div class="cl" style="top:288px"></div>
<div class="cl" style="top:324px"><span class="k">with</span></div>
<div class="cl" style="top:360px"></div>
<div class="cl" style="top:396px">customers <span class="k">as</span> <span class="b1">(</span></div>
<div class="cl" style="top:432px"></div>
<div class="cl" style="top:468px">    <span class="k">select</span> * <span class="k">from</span> <span class="b2">{{</span> <span class="v">ref</span><span class="b3">(</span><span class="s">'stg_customers'</span><span class="b3">)</span> <span class="b2">}}</span></div>
<div class="cl" style="top:504px"></div>
<div class="cl" style="top:540px"><span class="b1">)</span>,</div>
<div class="cl" style="top:576px"></div>
<div class="cl" style="top:612px">orders <span class="k">as</span> <span class="b1">(</span></div>
<div class="cl" style="top:648px"></div>
<div class="cl" style="top:684px">    <span class="k">select</span> * <span class="k">from</span> <span class="b2">{{</span> <span class="v">ref</span><span class="b3">(</span><span class="s">'orders'</span><span class="b3">)</span> <span class="b2">}}</span></div>
<div class="cl" style="top:720px"></div>
<div class="cl" style="top:756px"><span class="b1">)</span>,</div>
<div class="cl" style="top:792px"></div>
<div class="cl" style="top:828px">customer_orders_summary <span class="k">as</span> <span class="b1">(</span></div>
<div class="cl" style="top:864px"></div>
</div>
<div class="ln" style="left:0px;top:4px;height:36px;line-height:36px">1</div>
<div class="ln" style="left:0px;top:40px;height:36px;line-height:36px">2</div>
<div class="ln" style="left:0px;top:76px;height:36px;line-height:36px">3</div>
<div class="ln" style="left:0px;top:112px;height:36px;line-height:36px">4</div>
<div class="ln" style="left:0px;top:148px;height:36px;line-height:36px">5</div>
<div class="ln" style="left:0px;top:184px;height:36px;line-height:36px">6</div>
<div class="ln" style="left:0px;top:220px;height:36px;line-height:36px">7</div>
<div class="ln" style="left:0px;top:256px;height:36px;line-height:36px">8</div>
<div class="ln" style="left:0px;top:292px;height:36px;line-height:36px">9</div>
<div class="ln" style="left:0px;top:328px;height:36px;line-height:36px">10</div>
<div class="ln" style="left:0px;top:364px;height:36px;line-height:36px">11</div>
<div class="ln" style="left:0px;top:400px;height:36px;line-height:36px">12</div>
<div class="ln" style="left:0px;top:436px;height:36px;line-height:36px">13</div>
<div class="ln" style="left:0px;top:472px;height:36px;line-height:36px">14</div>
<div class="ln" style="left:0px;top:508px;height:36px;line-height:36px">15</div>
<div class="ln" style="left:0px;top:544px;height:36px;line-height:36px">16</div>
<div class="ln" style="left:0px;top:580px;height:36px;line-height:36px">17</div>
<div class="ln" style="left:0px;top:616px;height:36px;line-height:36px">18</div>
<div class="ln" style="left:0px;top:652px;height:36px;line-height:36px">19</div>
<div class="ln" style="left:0px;top:688px;height:36px;line-height:36px">20</div>
<div class="ln" style="left:0px;top:724px;height:36px;line-height:36px">21</div>
<div class="ln" style="left:0px;top:760px;height:36px;line-height:36px">22</div>
<div class="ln" style="left:0px;top:796px;height:36px;line-height:36px">23</div>
<div class="ln" style="left:0px;top:832px;height:36px;line-height:36px">24</div>
<div class="ln" style="left:0px;top:868px;height:36px;line-height:36px">25</div>
<div class="b" style="left:132px;top:40px;width:2px;height:216px;background:#d3d3d3"></div>
<div class="b" style="left:132px;top:436px;width:2px;height:72px;background:#d3d3d3"></div>
<div class="b" style="left:132px;top:652px;width:2px;height:72px;background:#d3d3d3"></div>
<div class="b" style="left:132px;top:868px;width:2px;height:72px;background:#d3d3d3"></div>
</div>
<div class="b" style="left:2620px;top:154px;width:800px;height:1200px;transform:scale(0.27683);transform-origin:0 0;font-family:'DejaVu Sans Mono','Liberation Mono',monospace;font-size:12px;line-height:14.4492px;white-space:pre;color:#000;font-weight:700"><div style="height:14.4492px"><span class="b1">{{</span></div><div style="height:14.4492px">  <span class="v">config</span><span class="b2">(</span></div><div style="height:14.4492px">    <span class="v">materialized</span> = <span class="s">"table"</span><span class="v">,</span></div><div style="height:14.4492px">    <span class="v">tags</span> = <span class="b3">[</span><span class="s">"events"</span><span class="v">,</span> <span class="s">"staging"</span><span class="b3">]</span><span class="v">,</span></div><div style="height:14.4492px">    <span class="v">meta</span> = <span class="b3">{</span><span class="s">"owner"</span>: <span class="s">"data-team"</span><span class="b3">}</span><span class="v">,</span></div><div style="height:14.4492px">    <span class="v">enabled</span> = <span class="k">true</span></div><div style="height:14.4492px">  <span class="b2">)</span></div><div style="height:14.4492px"><span class="b1">}}</span></div><div style="height:14.4492px"></div><div style="height:14.4492px"><span class="k">with</span></div><div style="height:14.4492px"></div><div style="height:14.4492px">customers <span class="k">as</span> <span class="b1">(</span></div><div style="height:14.4492px"></div><div style="height:14.4492px">    <span class="k">select</span> * <span class="k">from</span> <span class="b2">{{</span> <span class="v">ref</span><span class="b3">(</span><span class="s">'stg_customers'</span><span class="b3">)</span> <span class="b2">}}</span></div><div style="height:14.4492px"></div><div style="height:14.4492px"><span class="b1">)</span>,</div><div style="height:14.4492px"></div><div style="height:14.4492px">orders <span class="k">as</span> <span class="b1">(</span></div><div style="height:14.4492px"></div><div style="height:14.4492px">    <span class="k">select</span> * <span class="k">from</span> <span class="b2">{{</span> <span class="v">ref</span><span class="b3">(</span><span class="s">'orders'</span><span class="b3">)</span> <span class="b2">}}</span></div><div style="height:14.4492px"></div><div style="height:14.4492px"><span class="b1">)</span>,</div><div style="height:14.4492px"></div><div style="height:14.4492px">customer_orders_summary <span class="k">as</span> <span class="b1">(</span></div><div style="height:14.4492px"></div><div style="height:14.4492px">    <span class="k">select</span></div><div style="height:14.4492px">        orders.customer_id,</div><div style="height:14.4492px"></div><div style="height:14.4492px">        <span class="f">count</span><span class="b2">(</span><span class="k">distinct</span> orders.order_id<span class="b2">)</span> <span class="k">as</span> count_lifetime_orders,</div><div style="height:14.4492px">        <span class="f">count</span><span class="b2">(</span><span class="k">distinct</span> orders.order_id<span class="b2">)</span> &gt; <span class="n">1</span> <span class="k">as</span> is_repeat_buyer,</div><div style="height:14.4492px">        <span class="f">min</span><span class="b2">(</span>orders.ordered_at<span class="b2">)</span> <span class="k">as</span> first_ordered_at,</div><div style="height:14.4492px">        <span class="f">max</span><span class="b2">(</span>orders.ordered_at<span class="b2">)</span> <span class="k">as</span> last_ordered_at,</div><div style="height:14.4492px">        <span class="f">sum</span><span class="b2">(</span>orders.subtotal<span class="b2">)</span> <span class="k">as</span> lifetime_spend_pretax,</div><div style="height:14.4492px">        <span class="f">sum</span><span class="b2">(</span>orders.tax_paid<span class="b2">)</span> <span class="k">as</span> lifetime_tax_paid,</div><div style="height:14.4492px">        <span class="f">sum</span><span class="b2">(</span>orders.order_total<span class="b2">)</span> <span class="k">as</span> lifetime_spend</div><div style="height:14.4492px"></div><div style="height:14.4492px">    <span class="k">from</span> orders</div><div style="height:14.4492px"></div><div style="height:14.4492px">    <span class="k">group</span> <span class="k">by</span> <span class="n">1</span></div><div style="height:14.4492px"></div><div style="height:14.4492px"><span class="b1">)</span>,</div><div style="height:14.4492px"></div><div style="height:14.4492px">joined <span class="k">as</span> <span class="b1">(</span></div><div style="height:14.4492px"></div><div style="height:14.4492px">    <span class="k">select</span></div><div style="height:14.4492px">        customers.*,</div><div style="height:14.4492px"></div><div style="height:14.4492px">        customer_orders_summary.count_lifetime_orders,</div><div style="height:14.4492px">        customer_orders_summary.first_ordered_at,</div><div style="height:14.4492px">        customer_orders_summary.last_ordered_at,</div><div style="height:14.4492px">        customer_orders_summary.lifetime_spend_pretax,</div><div style="height:14.4492px">        customer_orders_summary.lifetime_tax_paid,</div><div style="height:14.4492px">        customer_orders_summary.lifetime_spend,</div><div style="height:14.4492px"></div><div style="height:14.4492px">        <span class="k">case</span></div><div style="height:14.4492px">            <span class="k">when</span> customer_orders_summary.is_repeat_buyer <span class="k">then</span> <span class="s">'returning'</span></div><div style="height:14.4492px">            <span class="k">else</span> <span class="s">'new'</span></div><div style="height:14.4492px">        <span class="k">end</span> <span class="k">as</span> customer_type</div><div style="height:14.4492px"></div><div style="height:14.4492px">    <span class="k">from</span> customers</div><div style="height:14.4492px"></div><div style="height:14.4492px">    <span class="k">left</span> <span class="k">join</span> customer_orders_summary</div><div style="height:14.4492px">        <span class="k">on</span> customers.customer_id = customer_orders_summary.customer_id</div><div style="height:14.4492px"></div><div style="height:14.4492px"><span class="b1">)</span></div><div style="height:14.4492px"></div><div style="height:14.4492px"><span class="k">select</span> * <span class="k">from</span> joined</div></div>
<div class="b" style="left:2852px;top:154px;width:28px;height:250px;background:#c4c4c4"></div>
<div class="b" style="left:2852px;top:458px;width:28px;height:4px;background:#424242"></div>
<div class="b" style="left:2850px;top:154px;width:2px;height:874px;background:linear-gradient(90deg,rgba(0,0,0,0),rgba(0,0,0,.06))"></div>
<div class="b" style="left:648px;top:1028px;width:2232px;height:2px;background:#e5e4e4"></div>
<div class="b" style="left:648px;top:1030px;width:2232px;height:70px;background:#fff"></div>
<div class="b" style="left:676px;top:1050px;width:28px;height:28px;color:#111;"><svg viewBox="0 0 28 28" stroke-width="2.4"><rect x="1.500" y="1.500" width="25" height="25" rx="2.500"/><path d="M2 4.500 H26" stroke-width="6" stroke-linecap="butt"/><path d="M1.500 13 H26.500 M1.500 19.800 H26.500 M14 7 V26.500"/></svg></div>
<div class="b" style="left:752px;top:1057px;width:28.5px;height:15px;color:#222;"><svg viewBox="0 0 28.5 15" stroke-width="2.2" ><path d="M7 1.500 L1.500 7.500 L7 13.500 M21.500 1.500 L27 7.500 L21.500 13.500 M16.500 1 L12 14"/></svg></div>
<div class="b" style="left:820px;top:1050px;width:28px;height:28px;color:#222;"><svg viewBox="0 0 28 28" stroke-width="2.2" ><path d="M20 1.800 a7.200 7.200 0 0 0 -8.700 9.600 L2.300 21.500 a2.900 2.900 0 0 0 4.200 4.200 L16.600 16.700 a7.200 7.200 0 0 0 9.600 -8.700 L21.500 12.300 L16.500 11.500 L15.700 6.500Z"/></svg></div>
<div class="b" style="left:866.5px;top:1060px;width:15px;height:9.5px;color:#3b3737;"><svg viewBox="0 0 18 11" stroke-width="2.3" preserveAspectRatio="none"><path d="M1.500 1.500 L9 9.500 L16.500 1.500"/></svg></div>
<div class="b" style="left:915px;top:1051px;width:26px;height:26px;color:#222;"><svg viewBox="0 0 26 26" stroke-width="2.2" ><path d="M24.500 1.500 L15.500 10.500 M11.500 8.500 L17.500 14.500 M12.500 9.500 L2 15 C5 21 8 23.500 11 24.500 L16.500 13.500 M7.500 18.500 L10 21"/></svg></div>
<div class="b" style="left:956px;top:1060px;width:15.5px;height:9.5px;color:#222;"><svg viewBox="0 0 18 11" stroke-width="2.3" preserveAspectRatio="none"><path d="M1.500 1.500 L9 9.500 L16.500 1.500"/></svg></div>
<div class="b" style="left:1010px;top:1052px;width:26px;height:23.5px;color:#2b2b2b;"><svg viewBox="0 0 26 23.500" stroke-width="2"><defs><linearGradient id="wg" x1="0" y1="1" x2="1" y2="0"><stop offset="0" stop-color="#e8672a"/><stop offset="1" stop-color="#7c4dff"/></linearGradient></defs><path d="M3 21.500 a2.300 2.300 0 0 1 0 -3.300 L19.500 2 a2.300 2.300 0 0 1 3.300 3.300 L6.300 21.500 a2.300 2.300 0 0 1 -3.300 0Z" stroke="url(#wg)"/><path d="M3.500 2.500 Q3.500 5.500 6.500 5.500 Q3.500 5.500 3.500 8.500 Q3.500 5.500 .500 5.500 Q3.500 5.500 3.500 2.500Z" stroke="#e8672a" fill="#e8672a" stroke-width="1"/><path d="M21.500 15.500 Q21.500 18.500 24.500 18.500 Q21.500 18.500 21.500 21.500 Q21.500 18.500 18.500 18.500 Q21.500 18.500 21.500 15.500Z" stroke="#7c4dff" fill="#7c4dff" stroke-width="1"/></svg></div>
<div class="b" style="left:1046px;top:1060px;width:15.5px;height:9.5px;color:#222;"><svg viewBox="0 0 18 11" stroke-width="2.3" preserveAspectRatio="none"><path d="M1.500 1.500 L9 9.500 L16.500 1.500"/></svg></div>
<div class="b" style="left:1084px;top:1030px;width:2px;height:70px;background:#e5e4e4"></div>
<div class="t" style="left:1135px;top:1043.50px;font-size:27.0px;line-height:36px;color:#1c1a1a;font-weight:400;font-style:normal;letter-spacing:-0.093px;">Commands</div>
<div class="t" style="left:1337.5px;top:1043.50px;font-size:27.0px;line-height:36px;color:#1c1a1a;font-weight:400;font-style:normal;letter-spacing:-0.031px;">Problems</div>
<div class="t" style="left:1516.5px;top:1043.50px;font-size:27.0px;line-height:36px;color:#1c1a1a;font-weight:400;font-style:normal;letter-spacing:-0.276px;">Results</div>
<div class="t" style="left:1670px;top:1043.50px;font-size:27.0px;line-height:36px;color:#1c1a1a;font-weight:400;font-style:normal;letter-spacing:0.299px;">Code quality</div>
<div class="t" style="left:1888px;top:1043.50px;font-size:27.0px;line-height:36px;color:#1c1a1a;font-weight:400;font-style:normal;letter-spacing:0.345px;">Compiled code</div>
<div class="t" style="left:2138px;top:1043.50px;font-size:27.0px;line-height:36px;color:#1c1a1a;font-weight:400;font-style:normal;letter-spacing:-0.058px;">Lineage</div>
<div class="b" style="left:2105px;top:1096px;width:161px;height:4px;background:#8a8585"></div>
<div class="b" style="left:648px;top:1100px;width:2232px;height:2px;background:#e5e4e4"></div>
<div class="b" style="left:648px;top:1102px;width:2232px;height:326px;overflow:hidden;background-color:#f6f6f6;background-image:radial-gradient(circle,#d4d4d4 0.6px,rgba(212,212,212,0) 1.1px);background-size:14.237px 14.237px;background-position:7.23px -1.67px">
<svg style="position:absolute;left:0;top:0;width:2232px;height:326px" viewBox="648 1102 2232 326" stroke-width="0.9">
<path d="M1122.2 1182 C1177.6 1182 1177.6 1182 1233 1182" stroke="#6e6e6e"/>
<path d="M1228.7 1178.5 L1232.5 1182 L1228.7 1185.5" stroke="#6e6e6e"/>
<path d="M1380.6 1182 C1479.8 1182 1479.8 1206 1579 1206" stroke="#6e6e6e"/>
<path d="M1574.7 1202.5 L1578.5 1206 L1574.7 1209.5" stroke="#6e6e6e"/>
<path d="M1351.5 1292.5 C1465.2 1292.5 1465.2 1206 1579 1206" stroke="#6e6e6e"/>
<path d="M1574.7 1202.5 L1578.5 1206 L1574.7 1209.5" stroke="#6e6e6e"/>
<path d="M831.3 1368 C885.9 1368 885.9 1380 940.5 1380" stroke="#6e6e6e"/>
<path d="M936.2 1376.5 L940.0 1380 L936.2 1383.5" stroke="#6e6e6e"/>
<path d="M831.3 1368 C1039.2 1368 1039.2 1292.5 1247 1292.5" stroke="#6e6e6e"/>
<path d="M1242.7 1289.0 L1246.5 1292.5 L1242.7 1296.0" stroke="#6e6e6e"/>
<path d="M1073 1380 C1160.0 1380 1160.0 1292.5 1247 1292.5" stroke="#6e6e6e"/>
<path d="M1242.7 1289.0 L1246.5 1292.5 L1242.7 1296.0" stroke="#6e6e6e"/>
<path d="M1073 1380 C1153.0 1380 1153.0 1380 1233 1380" stroke="#e6e6e6"/>
<path d="M1228.7 1376.5 L1232.5 1380 L1228.7 1383.5" stroke="#e6e6e6"/>
<path d="M1351.5 1292.5 C1463.5 1292.5 1463.5 1292.5 1575.6 1292.5" stroke="#e6e6e6"/>
<path d="M1571.3 1289.0 L1575.1 1292.5 L1571.3 1296.0" stroke="#e6e6e6"/>
<path d="M1706 1206 C1783.5 1206 1783.5 1206 1861 1206" stroke="#6e6e6e"/>
<path d="M1856.7 1202.5 L1860.5 1206 L1856.7 1209.5" stroke="#6e6e6e"/>
<path d="M1987 1206 C2042.3 1206 2042.3 1150 2097.7 1150" stroke="#6e6e6e"/>
<path d="M2093.3999999999996 1146.5 L2097.2 1150 L2093.3999999999996 1153.5" stroke="#6e6e6e"/>
<path d="M1987 1206 C2042.3 1206 2042.3 1237.5 2097.7 1237.5" stroke="#6e6e6e"/>
<path d="M2093.3999999999996 1234.0 L2097.2 1237.5 L2093.3999999999996 1241.0" stroke="#6e6e6e"/>
<path d="M1987 1206 C2042.3 1206 2042.3 1195 2097.7 1195" stroke="#6e6e6e"/>
<path d="M2093.3999999999996 1191.5 L2097.2 1195 L2093.3999999999996 1198.5" stroke="#6e6e6e"/>
<path d="M1987 1206 C2042.3 1206 2042.3 1215 2097.7 1215" stroke="#6e6e6e"/>
<path d="M2093.3999999999996 1211.5 L2097.2 1215 L2093.3999999999996 1218.5" stroke="#6e6e6e"/>
<path d="M2282.7 1237.5 C2321.6 1237.5 2321.6 1265 2360.6 1265" stroke="#6e6e6e"/>
<path d="M2356.2999999999997 1261.5 L2360.1 1265 L2356.2999999999997 1268.5" stroke="#6e6e6e"/>
<path d="M2279.7 1150 C2320.1 1150 2320.1 1265 2360.6 1265" stroke="#6e6e6e"/>
<path d="M2356.2999999999997 1261.5 L2360.1 1265 L2356.2999999999997 1268.5" stroke="#6e6e6e"/>
<path d="M2282.7 1237.5 C2455.8 1237.5 2455.8 1222 2628.8 1222" stroke="#6e6e6e"/>
<path d="M2624.5 1218.5 L2628.3 1222 L2624.5 1225.5" stroke="#6e6e6e"/>
<path d="M2279.7 1150 C2454.2 1150 2454.2 1222 2628.8 1222" stroke="#6e6e6e"/>
<path d="M2624.5 1218.5 L2628.3 1222 L2624.5 1225.5" stroke="#6e6e6e"/>
<path d="M2537.6 1265 C2583.2 1265 2583.2 1222 2628.8 1222" stroke="#6e6e6e"/>
<path d="M2624.5 1218.5 L2628.3 1222 L2624.5 1225.5" stroke="#6e6e6e"/>
<path d="M2279.7 1195 C2454.2 1195 2454.2 1222 2628.8 1222" stroke="#6e6e6e"/>
<path d="M2624.5 1218.5 L2628.3 1222 L2624.5 1225.5" stroke="#6e6e6e"/>
</svg>
<div class="b" style="left:292.1px;top:44.1px;width:182.5px;height:66.8px;border:1.4px solid #b7b2b2;border-radius:5px;background:#fff;box-shadow:0 1.5px 1.5px rgba(0,0,0,.07);">
<div class="b" style="left:12.799999999999999px;top:16.2px;width:31.5px;height:31.5px;border-radius:3px;background:#a8f4e4;color:#1c1a1a"><svg viewBox="0 0 12 12" stroke-width=".85" style="position:absolute;left:10px;top:5.200px;width:11.500px;height:11.500px"><ellipse cx="6" cy="2.500" rx="4" ry="1.600"/><path d="M2 2.500 V9.500 a4 1.600 0 0 0 8 0 V2.500 M2 4.800 a4 1.600 0 0 0 8 0 M2 7.200 a4 1.600 0 0 0 8 0"/></svg><div class="t" style="left:0;width:31.5px;text-align:center;top:19.4px;font-family:'DejaVu Sans Mono','Liberation Mono',monospace;font-size:9px;line-height:11px">SRC</div></div>
<div class="t" style="left:57.6px;top:25.0px;font-size:12.6px;line-height:16px;color:#1c1a1a;letter-spacing:-0.51px">ecom.raw_customers</div>
</div>
<div class="b" style="left:584.6px;top:44.1px;width:148.4px;height:66.8px;border:1.4px solid #b7b2b2;border-radius:5px;background:#fff;box-shadow:0 1.5px 1.5px rgba(0,0,0,.07);">
<div class="b" style="left:12.799999999999999px;top:16.2px;width:31.5px;height:31.5px;border-radius:3px;background:#dbeafd;color:#1c1a1a"><svg viewBox="0 0 12 12" stroke-width=".85" style="position:absolute;left:10px;top:5.200px;width:11.500px;height:11.500px"><path d="M6 .800 L10.800 3.300 V8.700 L6 11.200 L1.200 8.700 V3.300Z M1.200 3.300 L6 5.800 L10.800 3.300 M6 5.800 V11.200"/></svg><div class="t" style="left:0;width:31.5px;text-align:center;top:19.4px;font-family:'DejaVu Sans Mono','Liberation Mono',monospace;font-size:9px;line-height:11px">MDL</div></div>
<div class="t" style="left:57.6px;top:25.0px;font-size:12.6px;line-height:16px;color:#1c1a1a;letter-spacing:-0.453px">stg_customers</div>
</div>
<div class="b" style="left:598.6px;top:154.8px;width:105.3px;height:66.8px;border:1.4px solid #b7b2b2;border-radius:5px;background:#fff;box-shadow:0 1.5px 1.5px rgba(0,0,0,.07);">
<div class="b" style="left:12.799999999999999px;top:16.2px;width:31.5px;height:31.5px;border-radius:3px;background:#dbeafd;color:#1c1a1a"><svg viewBox="0 0 12 12" stroke-width=".85" style="position:absolute;left:10px;top:5.200px;width:11.500px;height:11.500px"><path d="M6 .800 L10.800 3.300 V8.700 L6 11.200 L1.200 8.700 V3.300Z M1.200 3.300 L6 5.800 L10.800 3.300 M6 5.800 V11.200"/></svg><div class="t" style="left:0;width:31.5px;text-align:center;top:19.4px;font-family:'DejaVu Sans Mono','Liberation Mono',monospace;font-size:9px;line-height:11px">MDL</div></div>
<div class="t" style="left:57.6px;top:25.0px;font-size:12.6px;line-height:16px;color:#1c1a1a;letter-spacing:-0.417px">orders</div>
</div>
<div class="b" style="left:56.6px;top:230.1px;width:127.1px;height:66.8px;border:1.4px solid #b7b2b2;border-radius:5px;background:#fff;box-shadow:0 1.5px 1.5px rgba(0,0,0,.07);">
<div class="b" style="left:12.799999999999999px;top:16.2px;width:31.5px;height:31.5px;border-radius:3px;background:#dbeafd;color:#1c1a1a"><svg viewBox="0 0 12 12" stroke-width=".85" style="position:absolute;left:10px;top:5.200px;width:11.500px;height:11.500px"><path d="M6 .800 L10.800 3.300 V8.700 L6 11.200 L1.200 8.700 V3.300Z M1.200 3.300 L6 5.800 L10.800 3.300 M6 5.800 V11.200"/></svg><div class="t" style="left:0;width:31.5px;text-align:center;top:19.4px;font-family:'DejaVu Sans Mono','Liberation Mono',monospace;font-size:9px;line-height:11px">MDL</div></div>
<div class="t" style="left:57.6px;top:25.0px;font-size:12.6px;line-height:16px;color:#1c1a1a;letter-spacing:-0.452px">stg_orders</div>
</div>
<div class="b" style="left:292.1px;top:242.1px;width:133.3px;height:66.8px;border:1.4px solid #b7b2b2;border-radius:5px;background:#fff;box-shadow:0 1.5px 1.5px rgba(0,0,0,.07);">
<div class="b" style="left:12.799999999999999px;top:16.2px;width:31.5px;height:31.5px;border-radius:3px;background:#dbeafd;color:#1c1a1a"><svg viewBox="0 0 12 12" stroke-width=".85" style="position:absolute;left:10px;top:5.200px;width:11.500px;height:11.500px"><path d="M6 .800 L10.800 3.300 V8.700 L6 11.200 L1.200 8.700 V3.300Z M1.200 3.300 L6 5.800 L10.800 3.300 M6 5.800 V11.200"/></svg><div class="t" style="left:0;width:31.5px;text-align:center;top:19.4px;font-family:'DejaVu Sans Mono','Liberation Mono',monospace;font-size:9px;line-height:11px">MDL</div></div>
<div class="t" style="left:57.6px;top:25.0px;font-size:12.6px;line-height:16px;color:#1c1a1a;letter-spacing:-0.5px">order_items</div>
</div>
<div class="b" style="left:584.6px;top:242.1px;width:240.8px;height:66.8px;border:1.4px solid #e7e5e5;border-radius:5px;background:rgba(255,255,255,.3);">
<div class="b" style="left:12.799999999999999px;top:16.2px;width:31.5px;height:31.5px;border-radius:3px;background:#e6f6e6;color:#cfd6cf"><svg viewBox="0 0 12 12" stroke-width=".85" style="position:absolute;left:10px;top:5.200px;width:11.500px;height:11.500px"><rect x="1.500" y="2" width="9" height="9.500" rx="1"/><rect x="4" y=".800" width="4" height="2.200" rx=".5"/><path d="M4 7 L5.500 8.500 L8.200 5.500"/></svg><div class="t" style="left:0;width:31.5px;text-align:center;top:19.4px;font-family:'DejaVu Sans Mono','Liberation Mono',monospace;font-size:9px;line-height:11px">TST</div></div>
<div class="t" style="left:57.6px;top:25.0px;font-size:12.6px;line-height:16px;color:#d6d3d3;letter-spacing:-0.542px">test_supply_costs_sum_correctly</div>
</div>
<div class="b" style="left:930.6px;top:67.5px;width:127.8px;height:67.5px;border:1.8px solid #4a4545;border-radius:5px;background:#fff;box-shadow:0 6px 10px rgba(0,0,0,.16),0 1px 3px rgba(0,0,0,.12);">
<div class="b" style="left:12.399999999999999px;top:16.2px;width:31.5px;height:31.5px;border-radius:3px;background:#dbeafd;color:#1c1a1a"><svg viewBox="0 0 12 12" stroke-width=".85" style="position:absolute;left:10px;top:5.200px;width:11.500px;height:11.500px"><path d="M6 .800 L10.800 3.300 V8.700 L6 11.200 L1.200 8.700 V3.300Z M1.200 3.300 L6 5.800 L10.800 3.300 M6 5.800 V11.200"/></svg><div class="t" style="left:0;width:31.5px;text-align:center;top:19.4px;font-family:'DejaVu Sans Mono','Liberation Mono',monospace;font-size:9px;line-height:11px">MDL</div></div>
<div class="t" style="left:57.2px;top:24.9px;font-size:12.6px;line-height:16px;color:#1c1a1a;letter-spacing:-0.388px">customers</div>
</div>
<div class="b" style="left:927.2px;top:155.5px;width:284.2px;height:66.5px;border:1.4px solid #e7e5e5;border-radius:5px;background:rgba(255,255,255,.3);">
<div class="b" style="left:12.799999999999999px;top:16.1px;width:31.5px;height:31.5px;border-radius:3px;background:#e6f6e6;color:#cfd6cf"><svg viewBox="0 0 12 12" stroke-width=".85" style="position:absolute;left:10px;top:5.200px;width:11.500px;height:11.500px"><rect x="1.500" y="2" width="9" height="9.500" rx="1"/><rect x="4" y=".800" width="4" height="2.200" rx=".5"/><path d="M4 7 L5.500 8.500 L8.200 5.500"/></svg><div class="t" style="left:0;width:31.5px;text-align:center;top:19.4px;font-family:'DejaVu Sans Mono','Liberation Mono',monospace;font-size:9px;line-height:11px">TST</div></div>
<div class="t" style="left:57.6px;top:16.9px;font-size:12.6px;line-height:16px;color:#d6d3d3;letter-spacing:-0.522px">test_order_items_compute_to_bools<br>_correctly</div>
</div>
<div class="b" style="left:1212.6px;top:67.9px;width:126.8px;height:66.8px;border:1.4px solid #b7b2b2;border-radius:5px;background:#fff;box-shadow:0 1.5px 1.5px rgba(0,0,0,.07);">
<div class="b" style="left:12.799999999999999px;top:16.2px;width:31.5px;height:31.5px;border-radius:3px;background:#f4aebb;color:#1c1a1a"><svg viewBox="0 0 12 12" stroke-width=".85" style="position:absolute;left:10px;top:5.200px;width:11.500px;height:11.500px"><circle cx="2.500" cy="2" r="1.300"/><circle cx="9.800" cy="4.500" r="1.300"/><circle cx="3.500" cy="10" r="1.300"/><circle cx="5" cy="5.300" r=".9"/><path d="M3 3.200 L4.600 4.600 M5.900 5.100 L8.500 4.700 M4.700 6.200 L3.800 8.700"/></svg><div class="t" style="left:0;width:31.5px;text-align:center;top:19.4px;font-family:'DejaVu Sans Mono','Liberation Mono',monospace;font-size:9px;line-height:11px">SEM</div></div>
<div class="t" style="left:57.6px;top:25.0px;font-size:12.6px;line-height:16px;color:#1c1a1a;letter-spacing:-0.388px">customers</div>
</div>
<div class="b" style="left:1449.3px;top:12.5px;width:182.8px;height:66.5px;border:1.4px solid #b7b2b2;border-radius:5px;background:#fff;box-shadow:0 1.5px 1.5px rgba(0,0,0,.07);">
<div class="b" style="left:12.799999999999999px;top:16.1px;width:31.5px;height:31.5px;border-radius:3px;background:#fbe49c;color:#1c1a1a"><svg viewBox="0 0 12 12" stroke-width=".85" style="position:absolute;left:10px;top:5.200px;width:11.500px;height:11.500px"><path d="M1 .800 V11 H11.500"/><rect x="3" y="5.500" width="2.200" height="5.500"/><rect x="6.200" y="3" width="2.200" height="8"/><rect x="9.300" y=".800" width="2.200" height="10.200"/></svg><div class="t" style="left:0;width:31.5px;text-align:center;top:19.4px;font-family:'DejaVu Sans Mono','Liberation Mono',monospace;font-size:9px;line-height:11px">MET</div></div>
<div class="t" style="left:57.6px;top:24.9px;font-size:12.6px;line-height:16px;color:#1c1a1a;letter-spacing:-0.448px">count_lifetime_orders</div>
</div>
<div class="b" style="left:1449.3px;top:99.8px;width:185.8px;height:66.5px;border:1.4px solid #b7b2b2;border-radius:5px;background:#fff;box-shadow:0 1.5px 1.5px rgba(0,0,0,.07);">
<div class="b" style="left:12.799999999999999px;top:16.1px;width:31.5px;height:31.5px;border-radius:3px;background:#fbe49c;color:#1c1a1a"><svg viewBox="0 0 12 12" stroke-width=".85" style="position:absolute;left:10px;top:5.200px;width:11.500px;height:11.500px"><path d="M1 .800 V11 H11.500"/><rect x="3" y="5.500" width="2.200" height="5.500"/><rect x="6.200" y="3" width="2.200" height="8"/><rect x="9.300" y=".800" width="2.200" height="10.200"/></svg><div class="t" style="left:0;width:31.5px;text-align:center;top:19.4px;font-family:'DejaVu Sans Mono','Liberation Mono',monospace;font-size:9px;line-height:11px">MET</div></div>
<div class="t" style="left:57.6px;top:24.9px;font-size:12.6px;line-height:16px;color:#1c1a1a;letter-spacing:-0.429px">lifetime_spend_pretax</div>
</div>
<div class="b" style="left:1712.2px;top:127.5px;width:177.8px;height:66.5px;border:1.4px solid #b7b2b2;border-radius:5px;background:#fff;box-shadow:0 1.5px 1.5px rgba(0,0,0,.07);">
<div class="b" style="left:12.799999999999999px;top:16.1px;width:31.5px;height:31.5px;border-radius:3px;background:#fbe49c;color:#1c1a1a"><svg viewBox="0 0 12 12" stroke-width=".85" style="position:absolute;left:10px;top:5.200px;width:11.500px;height:11.500px"><path d="M1 .800 V11 H11.500"/><rect x="3" y="5.500" width="2.200" height="5.500"/><rect x="6.200" y="3" width="2.200" height="8"/><rect x="9.300" y=".800" width="2.200" height="10.200"/></svg><div class="t" style="left:0;width:31.5px;text-align:center;top:19.4px;font-family:'DejaVu Sans Mono','Liberation Mono',monospace;font-size:9px;line-height:11px">MET</div></div>
<div class="t" style="left:57.6px;top:24.9px;font-size:12.6px;line-height:16px;color:#1c1a1a;letter-spacing:-0.66px">average_order_value</div>
</div>
<div class="b" style="left:1980.4px;top:83.7px;width:197.8px;height:66.8px;border:1.4px solid #b7b2b2;border-radius:5px;background:#fff;box-shadow:0 1.5px 1.5px rgba(0,0,0,.07);">
<div class="b" style="left:12.799999999999999px;top:16.2px;width:31.5px;height:31.5px;border-radius:3px;background:#f8dfc0;color:#1c1a1a"><svg viewBox="0 0 12 12" stroke-width=".85" style="position:absolute;left:10px;top:5.200px;width:11.500px;height:11.500px"><path d="M1.500 1 H8.500 L11 3.500 V11 H1 V1.500Z M3.500 1 V4 H8 V1 M3 11 V7 H9 V11"/></svg><div class="t" style="left:0;width:31.5px;text-align:center;top:19.4px;font-family:'DejaVu Sans Mono','Liberation Mono',monospace;font-size:9px;line-height:11px">SVQ</div></div>
<div class="t" style="left:57.6px;top:25.0px;font-size:12.6px;line-height:16px;color:#1c1a1a;letter-spacing:-0.454px">customer_order_metrics</div>
</div>
<div class="b" style="left:1361.5px;top:48.299999999999955px;width:615px;height:79px;border:2px solid #8f8a8a;border-radius:13px;background:rgba(255,255,255,.9)"></div>
<div class="b" style="left:1745.1999999999998px;top:50.5px;width:2px;height:74.5px;background:#8a8585"></div>
<div class="t" style="left:1388px;top:70.8px;font-size:28px;line-height:36px;color:#1c1a1a;letter-spacing:-0.1px">2+customers+2</div>
<div class="t" style="left:1767.6999999999998px;top:68.7px;font-size:28.5px;line-height:39px;font-weight:400;color:#262424;-webkit-text-stroke:0.7px #262424;letter-spacing:0.522px">Update Graph</div>
<div class="b" style="left:2032.3px;top:48.4px;width:67.6px;height:63px;border:2.4px solid #d6d3d3;border-radius:14px;background:#fff;box-shadow:0 1px 2px rgba(0,0,0,.06)"><div class="b" style="left:17.4px;top:15px;width:28px;height:28px;color:#1c1a1a"><svg viewBox="0 0 28 28" stroke-width="2.1" ><path d="M1.500 8 V3 a1.500 1.500 0 0 1 1.500 -1.500 H8 M20 1.500 H25 a1.500 1.500 0 0 1 1.500 1.500 V8 M26.500 20 V25 a1.500 1.500 0 0 1 -1.500 1.500 H20 M8 26.500 H3 a1.500 1.500 0 0 1 -1.500 -1.500 V20"/></svg></div></div>
<div class="b" style="left:2116.3px;top:48.4px;width:67.6px;height:63px;border:2.4px solid #d6d3d3;border-radius:14px;background:#fff;box-shadow:0 1px 2px rgba(0,0,0,.06)"><div class="b" style="left:17.4px;top:15px;width:28px;height:28px;color:#1c1a1a"><svg viewBox="0 0 28 28" stroke-width="2.1" ><path d="M24.500 15 a10.500 10.500 0 1 1 -4 -8.300 M16.500 1.500 L21.500 6 L17 11"/></svg></div></div>
</div>
<div class="b" style="left:648px;top:1428px;width:2232px;height:2px;background:#e5e4e4"></div>
<div class="b" style="left:648px;top:1430px;width:2232px;height:78px;background:#fff"></div>
<div class="b" style="left:648px;top:1430px;width:1435px;height:78.5px;border-right:2px solid #f1f0f0;border-bottom:2px solid #f6f5f5;border-bottom-right-radius:18px"></div>
<div class="t" style="left:673px;top:1451.50px;font-size:27.0px;line-height:36px;color:#6f6b6b;font-weight:400;font-style:normal;letter-spacing:0.395px;-webkit-text-stroke:0.3px #6f6b6b;">Type a command, ex. dbt build --select &lt;model_name&gt;</div>
<div class="b" style="left:2108px;top:1449px;width:79px;height:40px;border:2px solid #8a8585;border-radius:20px;background:#fff"></div>
<div class="b" style="left:2114px;top:1455px;width:28px;height:28px;background:#4a4545;border-radius:14px"></div>
<div class="t" style="left:2212px;top:1449.80px;font-size:30px;line-height:39px;color:#474242;font-weight:400;font-style:normal;letter-spacing:0.325px;-webkit-text-stroke:0.7px #474242;">Defer to staging/production</div>
<div class="b" style="left:2590.5px;top:1454.5px;width:23px;height:23px;color:#6f6b6b;"><svg viewBox="0 0 23 23" stroke-width="1.8" ><circle cx="11.500" cy="11.500" r="10"/><path d="M8.500 9 a3 3 0 1 1 4.500 2.600 c-1 .6 -1.500 1.200 -1.500 2.400 M11.500 17 v.3"/></svg></div>
<div class="b" style="left:2638px;top:1445px;width:142px;height:48px;background:#c6f7d2;border-radius:11px"></div>
<div class="b" style="left:2651px;top:1456px;width:27px;height:27px;color:#1c1a1a;"><svg viewBox="0 0 27 27" stroke-width="2.4" ><circle cx="13.500" cy="13.500" r="12"/></svg></div>
<div class="t" style="left:2690.5px;top:1451.54px;font-size:27px;line-height:36px;color:#1c1a1a;font-weight:400;font-style:normal;letter-spacing:-0.309px;-webkit-text-stroke:0.9px #1c1a1a;">Ready</div>
<div class="b" style="left:2797px;top:1438px;width:67px;height:62px;border:2px solid #8a8585;border-radius:11px;background:#fff"></div>
<div class="b" style="left:2817px;top:1465.5px;width:27px;height:6px;color:#1c1a1a;"><svg viewBox="0 0 27 6" style="stroke:none"><circle cx="3" cy="3" r="2.700" fill="currentColor"/><circle cx="13.500" cy="3" r="2.700" fill="currentColor"/><circle cx="24" cy="3" r="2.700" fill="currentColor"/></svg></div>
<div class="b" style="left:0;top:1484px;width:24px;height:24px;background:radial-gradient(circle at 24px 0,rgba(13,21,13,0) 23px,#0d150d 24px)"></div>
<div class="b" style="left:2856px;top:1484px;width:24px;height:24px;background:radial-gradient(circle at 0 0,rgba(13,21,13,0) 23px,#0d150d 24px)"></div>
</div></body></html>
